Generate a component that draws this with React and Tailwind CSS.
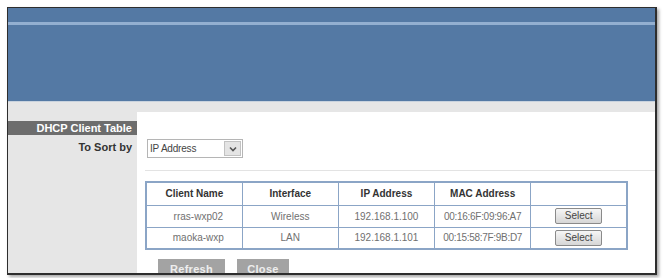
import React from 'react';

const rows = [
  { name: 'rras-wxp02', iface: 'Wireless', ip: '192.168.1.100', mac: '00:16:6F:09:96:A7' },
  { name: 'maoka-wxp', iface: 'LAN', ip: '192.168.1.101', mac: '00:15:58:7F:9B:D7' },
];

export default function App() {
  return (
    <div className="w-[664px] h-[278px] bg-white pl-[7px] pt-[7px] overflow-hidden font-['Liberation_Sans',Arial,sans-serif]">
      <div className="w-[650px] h-[268px] border border-[#2e2e2e] border-b-2 border-r-2 shadow-[2px_2px_3px_rgba(0,0,0,0.35)] flex flex-col overflow-hidden">
        {/* header */}
        <div className="h-[93px] bg-[#5479a4] pt-[14px] shrink-0">
          <div className="h-[3px] bg-[#93afd0]" />
        </div>
        <div className="h-[11px] bg-[#e6e6e6] border-t border-[#c9d3de] shrink-0" />

        <div className="flex flex-1">
          {/* left column */}
          <div className="w-[129px] bg-[#e6e6e6] pt-[9px] shrink-0">
            <div className="h-[14px] bg-[#6d6d6d] text-white text-[11px] font-bold leading-[14px] text-right pr-[5px]">
              DHCP Client Table
            </div>
            <div className="text-[#333] text-[11px] font-bold text-right pr-[5px] mt-[4px]">To Sort by</div>
          </div>

          {/* right content */}
          <div className="flex-1 pt-[27px]">
            <div className="ml-[10px] flex items-center w-[96px] h-[19px] border border-[#b5b5b5] bg-white">
              <span className="flex-1 text-[10px] text-[#444] pl-[2px] tracking-[-0.2px]">IP Address</span>
              <span className="w-[17px] h-[15px] mr-[1px] bg-[#e4e4e4] border border-[#c2c2c2] flex items-center justify-center">
                <svg width="8" height="6" viewBox="0 0 8 6">
                  <path d="M1 1.5 L4 4.5 L7 1.5" stroke="#555" strokeWidth="1.6" fill="none" />
                </svg>
              </span>
            </div>

            <div className="mt-[12px] ml-[8px] h-px bg-[#e3e3e3]" />

            <table className="mt-[10px] ml-[8px] w-[483px] border-collapse border-2 border-[#8ba5c6] text-[10px] table-fixed">
              <thead>
                <tr className="h-[23px]">
                  {['Client Name', 'Interface', 'IP Address', 'MAC Address', ''].map((h, i) => (
                    <th key={i} className="border border-[#8ba5c6] font-bold text-[#333] text-center w-[96px]">
                      {h}
                    </th>
                  ))}
                </tr>
              </thead>
              <tbody>
                {rows.map((r) => (
                  <tr key={r.mac} className="h-[22px] text-[#707070]">
                    <td className="border border-[#8ba5c6] text-center pl-[8px]">{r.name}</td>
                    <td className="border border-[#8ba5c6] text-center">{r.iface}</td>
                    <td className="border border-[#8ba5c6] text-center">{r.ip}</td>
                    <td className="border border-[#8ba5c6] text-center tracking-[-0.3px]">{r.mac}</td>
                    <td className="border border-[#8ba5c6] text-center">
                      <button className="w-[47px] h-[16px] text-[10px] leading-[14px] text-[#444] bg-gradient-to-b from-[#f6f6f6] to-[#d6d6d6] border border-[#8a8a8a] rounded-[2px]">
                        Select
                      </button>
                    </td>
                  </tr>
                ))}
              </tbody>
            </table>

            <div className="mt-[9px] ml-[21px] flex gap-[12px]">
              <button className="w-[67px] h-[20px] bg-[#a3a3a3] text-[#eeeeee] text-[11px] font-bold tracking-[0.3px]">
                Refresh
              </button>
              <button className="w-[52px] h-[20px] bg-[#a3a3a3] text-[#eeeeee] text-[11px] font-bold tracking-[0.3px]">
                Close
              </button>
            </div>
          </div>
        </div>
      </div>
    </div>
  );
}
